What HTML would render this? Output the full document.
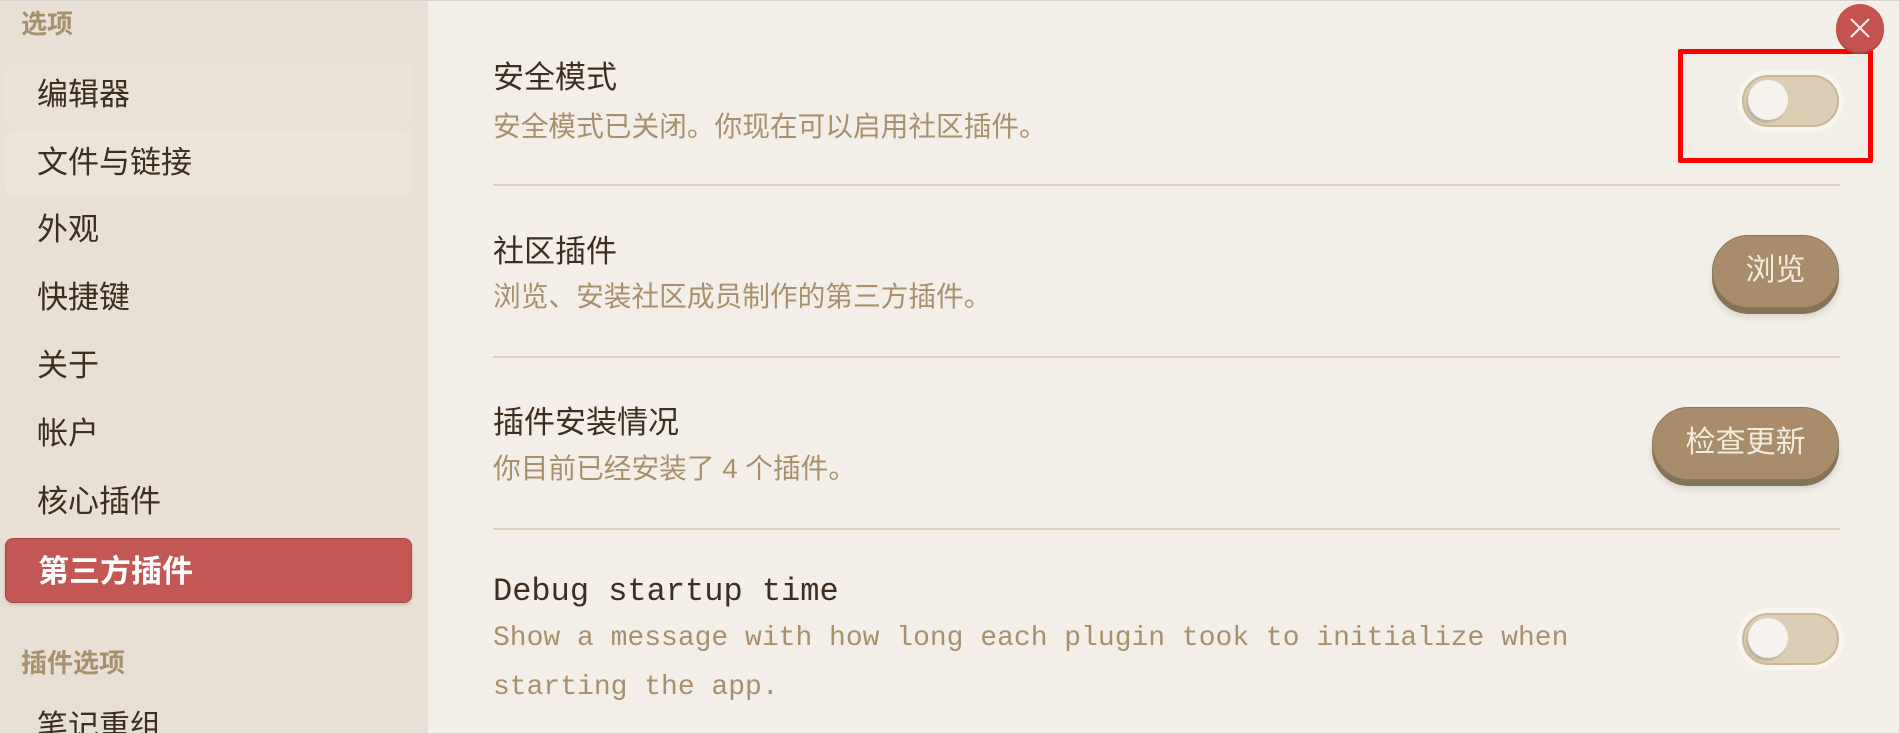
<!DOCTYPE html>
<html><head><meta charset="utf-8"><style>
*{margin:0;padding:0;box-sizing:border-box}
body{width:1900px;height:734px;overflow:hidden;background:#f3efe8;font-family:"Liberation Sans","Noto Sans CJK SC",sans-serif;position:relative}
.frame{position:absolute;left:0;top:0;width:1900px;height:734px;border:1px solid #d6d3cf;border-left:none}
.side{position:absolute;left:0;top:0;width:428px;height:734px;background:#e8e0d4;overflow:hidden}
.hdr{position:absolute;left:21px;font-size:26px;color:#a8906c;font-weight:bold}
.item{position:absolute;left:5px;width:407px;height:66px;border-radius:8px;font-size:31px;color:#3e2e1f;padding-left:32px;line-height:66px}
.item.hov{background:#ebe4d8}
.item.act{background:#c25753;border:1px solid #a84542;color:#fff;font-weight:bold;box-shadow:0 2px 3px rgba(0,0,0,.15)}
.t{position:absolute;left:493px;font-size:31px;color:#3e2e1f}
.d{position:absolute;left:493px;font-size:27.7px;color:#a8906c}
.sep{position:absolute;left:493px;width:1347px;height:2px;background:#ddd0bb}
.mono{font-family:"Liberation Mono",monospace}
.tog{position:absolute;left:1742px;width:97px;height:52px;border-radius:26px;background:#dccdb5;border:2px solid #cbb797;box-shadow:0 0 0 5px #f8f4ee}
.tog:after{content:"";position:absolute;left:4px;top:3px;width:40px;height:40px;border-radius:50%;background:#f6f3ef;box-shadow:-2px 3px 2px #bdb2a2}
.btn{position:absolute;height:73px;border-radius:37px;background:#a98c69;box-shadow:0 6px 0 #857358,0 9px 8px rgba(0,0,0,.12);color:#f3ebdd;font-size:30px;text-align:center;line-height:70px;border:1px solid #8f765a}
</style></head><body>
<div class="side">
<div class="hdr" style="top:4px">选项</div>
<div class="item hov" style="top:62px;background:#e9e2d6">编辑器</div>
<div class="item hov" style="top:130px">文件与链接</div>
<div class="item" style="top:197px">外观</div>
<div class="item" style="top:265px">快捷键</div>
<div class="item" style="top:333px">关于</div>
<div class="item" style="top:401px">帐户</div>
<div class="item" style="top:469px">核心插件</div>
<div class="item act" style="top:538px;height:65px">第三方插件</div>
<div class="hdr" style="top:643px">插件选项</div>
<div class="item" style="top:694px">笔记重组</div>
</div>
<div class="frame"></div>

<div class="t" style="top:52px">安全模式</div>
<div class="d" style="top:104px">安全模式已关闭。你现在可以启用社区插件。</div>
<div class="sep" style="top:184px"></div>
<div class="t" style="top:226px">社区插件</div>
<div class="d" style="top:274px">浏览、安装社区成员制作的第三方插件。</div>
<div class="sep" style="top:356px"></div>
<div class="t" style="top:397px">插件安装情况</div>
<div class="d" style="top:446px">你目前已经安装了 4 个插件。</div>
<div class="sep" style="top:528px"></div>
<div class="t mono" style="top:573px;font-size:32px">Debug startup time</div>
<div class="d mono" style="top:614px;font-size:28px;line-height:49px;width:1090px">Show a message with how long each plugin took to initialize when starting the app.</div>

<div class="tog" style="top:75px"></div>
<div class="tog" style="top:613px"></div>
<div class="btn" style="left:1712px;top:235px;width:127px">浏览</div>
<div class="btn" style="left:1652px;top:407px;width:187px">检查更新</div>

<div style="position:absolute;left:1678px;top:49px;width:195px;height:114px;border:5px solid #ff0000;border-radius:2px"></div>
<svg style="position:absolute;left:1835px;top:4px" width="50" height="50" viewBox="0 0 50 50">
<circle cx="25" cy="26" r="24" fill="#b04542"/><circle cx="25" cy="24" r="24" fill="#c4524f"/>
<path d="M16 15L34 33M34 15L16 33" stroke="#f6e9e6" stroke-width="2.2"/>
</svg>
</body></html>
